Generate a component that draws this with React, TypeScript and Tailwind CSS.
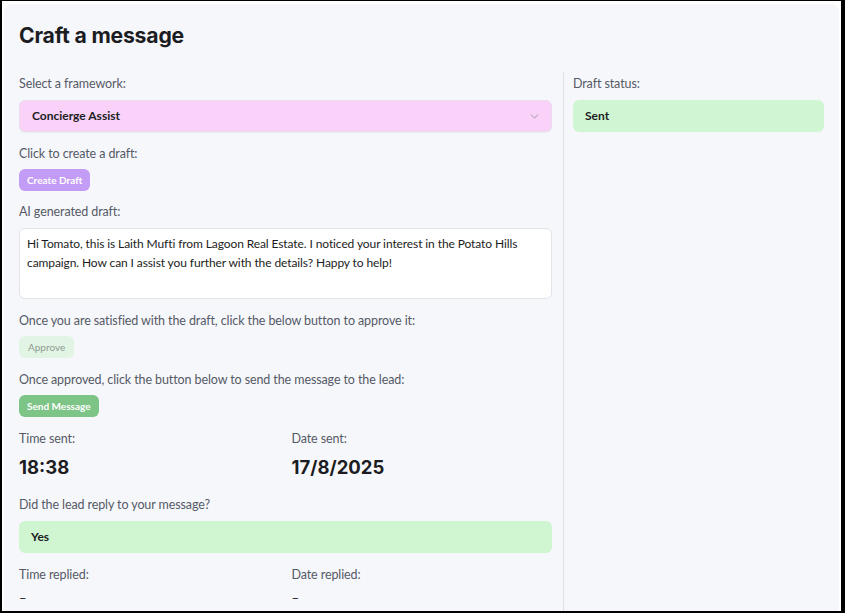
import { ChevronDown } from "lucide-react";

const BODY_FONT = "font-['Lato',sans-serif]";

function Label({ children }: { children: React.ReactNode }) {
  return <p className="text-[12.5px] leading-[18px] tracking-[-0.1px] text-[#555a66]">{children}</p>;
}

function Value({ children }: { children: React.ReactNode }) {
  return (
    <p className="mt-[7px] font-['Inter',sans-serif] text-[18.5px] font-bold leading-[24px] text-[#1c1d22]">
      {children}
    </p>
  );
}

export default function App() {
  return (
    <div
      className={`w-[845px] h-[613px] overflow-hidden bg-white border-l-2 border-t border-r-4 border-b-2 border-black pl-[2px] pt-[3px] pr-[2px] ${BODY_FONT}`}
    >
      <div className="h-[640px] rounded-t-lg bg-[#f6f7fb] px-[15px] pt-[17px]">
        <h1 className="font-['Inter',sans-serif] text-[21.2px] font-bold leading-[28px] text-[#1c1d22] tracking-[-0.2px]">
          Craft a message
        </h1>

        <div className="mt-[23px] flex">
          {/* left column */}
          <div className="w-[533px] pt-[3px] pb-4">
            <Label>Select a framework:</Label>
            <div className="mt-[7px] flex h-[32px] items-center justify-between rounded-md border border-[#ecdcec] bg-[#f9d1f9] pl-[12px] pr-[10px] shadow-[0_1px_1px_rgba(0,0,0,0.04)]">
              <span className="text-[12px] font-bold text-[#1c1d22]">Concierge Assist</span>
              <ChevronDown size={13} strokeWidth={1.5} className="text-[#8a8a99]" />
            </div>

            <div className="mt-[13px]">
              <Label>Click to create a draft:</Label>
            </div>
            <button className="mt-[6px] block h-[22px] rounded-md bg-[#c39cf5] px-[8px] text-[10px] font-bold text-white">
              Create Draft
            </button>

            <div className="mt-[12px]">
              <Label>AI generated draft:</Label>
            </div>
            <div className="mt-[7px] h-[71px] rounded-md border border-[#e3e4ea] bg-white px-[7px] pt-[5px] text-[12px] leading-[19px] tracking-[-0.1px] text-[#1c1d22]">
              Hi Tomato, this is Laith Mufti from Lagoon Real Estate. I noticed your interest in the Potato Hills
              <br />
              campaign. How can I assist you further with the details? Happy to help!
            </div>

            <div className="mt-[13px]">
              <Label>Once you are satisfied with the draft, click the below button to approve it:</Label>
            </div>
            <button className="mt-[6px] block h-[22px] rounded-md bg-[#e2f5e4] px-[9px] text-[10px] text-[#8f9a91]">
              Approve
            </button>

            <div className="mt-[13px]">
              <Label>Once approved, click the button below to send the message to the lead:</Label>
            </div>
            <button className="mt-[6px] block h-[22px] rounded-md bg-[#7dc487] px-[8px] text-[10px] font-bold text-white">
              Send Message
            </button>

            <div className="mt-[13px] grid grid-cols-2 gap-x-3">
              <div>
                <Label>Time sent:</Label>
                <Value>18:38</Value>
              </div>
              <div>
                <Label>Date sent:</Label>
                <Value>17/8/2025</Value>
              </div>
            </div>

            <div className="mt-[17px]">
              <Label>Did the lead reply to your message?</Label>
            </div>
            <div className="mt-[7px] flex h-[32px] items-center rounded-md bg-[#d0f5d1] px-[12px]">
              <span className="text-[12px] font-bold text-[#1c1d22]">Yes</span>
            </div>

            <div className="mt-[13px] grid grid-cols-2 gap-x-3">
              <div>
                <Label>Time replied:</Label>
                <p className="mt-[5px] text-[13px] leading-[18px] text-[#1c1d22]">–</p>
              </div>
              <div>
                <Label>Date replied:</Label>
                <p className="mt-[5px] text-[13px] leading-[18px] text-[#1c1d22]">–</p>
              </div>
            </div>
          </div>

          {/* divider */}
          <div className="ml-[11px] w-px bg-[#dfe0e6]" />

          {/* right column */}
          <div className="ml-[9px] w-[251px] pt-[3px]">
            <Label>Draft status:</Label>
            <div className="mt-[7px] flex h-[32px] items-center rounded-md bg-[#d0f5d3] px-[12px]">
              <span className="text-[12px] font-bold text-[#1c1d22]">Sent</span>
            </div>
          </div>
        </div>
      </div>
    </div>
  );
}
